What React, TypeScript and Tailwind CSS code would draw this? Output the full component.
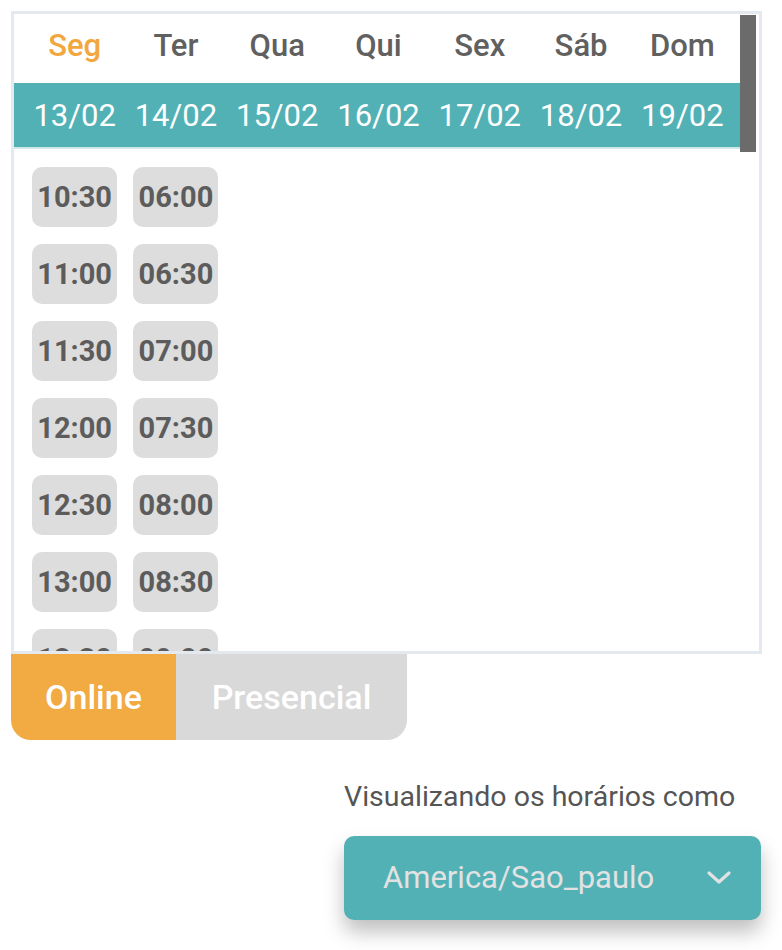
import React from "react";

const days = ["Seg", "Ter", "Qua", "Qui", "Sex", "Sáb", "Dom"];
const dates = ["13/02", "14/02", "15/02", "16/02", "17/02", "18/02", "19/02"];
const col1 = ["10:30", "11:00", "11:30", "12:00", "12:30", "13:00", "13:30"];
const col2 = ["06:00", "06:30", "07:00", "07:30", "08:00", "08:30", "09:00"];

function Slot({ t }: { t: string }) {
  return (
    <div className="w-[85px] h-[60px] shrink-0 rounded-[10px] bg-[#dddddd] flex items-center justify-center text-[29px] font-bold text-[#5c5c5c] leading-none">
      {t}
    </div>
  );
}

export default function App() {
  return (
    <div className="w-[782px] h-[950px] bg-white font-['Roboto',sans-serif] relative overflow-hidden">
      <div className="pt-[11px] pl-[11px]">
        {/* calendar box */}
        <div className="w-[751px] h-[643px] border-[3px] border-[#e4e9ef] flex overflow-hidden">
          <div className="flex-1 flex flex-col overflow-hidden">
            <div className="h-[69px] shrink-0 grid grid-cols-7 pl-[10px] pr-[7px] pb-[6px] items-center">
              {days.map((d, i) => (
                <div
                  key={d}
                  className={`text-center text-[31px] font-medium leading-none ${i === 0 ? "text-[#f2a73e]" : "text-[#606060]"}`}
                >
                  {d}
                </div>
              ))}
            </div>
            <div className="h-[66px] shrink-0 bg-[#52b1b5] border-b-[2px] border-[#cfe9ea] grid grid-cols-7 pl-[10px] pr-[7px] items-center">
              {dates.map((d) => (
                <div key={d} className="text-center text-[31px] text-white leading-none">
                  {d}
                </div>
              ))}
            </div>
            <div className="grid grid-cols-7 pl-[10px] pr-[7px] pt-[18px]">
              <div className="flex flex-col items-center gap-[17px]">
                {col1.map((t) => (
                  <Slot key={t} t={t} />
                ))}
              </div>
              <div className="flex flex-col items-center gap-[17px]">
                {col2.map((t) => (
                  <Slot key={t} t={t} />
                ))}
              </div>
            </div>
          </div>
          <div className="w-[19px] shrink-0 pr-[3px] pt-[1px]">
            <div className="w-[16px] h-[137px] bg-[#6b6b6b]" />
          </div>
        </div>
        {/* toggle */}
        <div className="flex w-[396px] h-[86px] rounded-b-[20px] overflow-hidden">
          <div className="w-[165px] bg-[#f2aa43] flex items-center justify-center text-white text-[34px] font-medium leading-none">
            Online
          </div>
          <div className="flex-1 bg-[#d9d9d9] flex items-center justify-center text-white text-[34px] font-medium leading-none">
            Presencial
          </div>
        </div>
      </div>
      {/* timezone */}
      <div className="flex justify-end pr-[21px] mt-[43px]">
        <div className="w-[417px] flex flex-col">
          <div className="text-[28.5px] text-[#555555] leading-none">
            Visualizando os horários como
          </div>
          <div className="mt-[24px] h-[84px] rounded-[10px] bg-[#52b1b5] shadow-[0_12px_20px_rgba(0,0,0,0.25)] flex items-center justify-between pl-[39px] pr-[30px]">
            <span className="text-[31px] text-[#e2e2e2] leading-none">America/Sao_paulo</span>
            <svg width="24" height="14" viewBox="0 0 24 14" fill="none">
              <path d="M2 2 L12 11 L22 2" stroke="#e2e2e2" strokeWidth="3.2" strokeLinecap="round" strokeLinejoin="round" />
            </svg>
          </div>
        </div>
      </div>
    </div>
  );
}
